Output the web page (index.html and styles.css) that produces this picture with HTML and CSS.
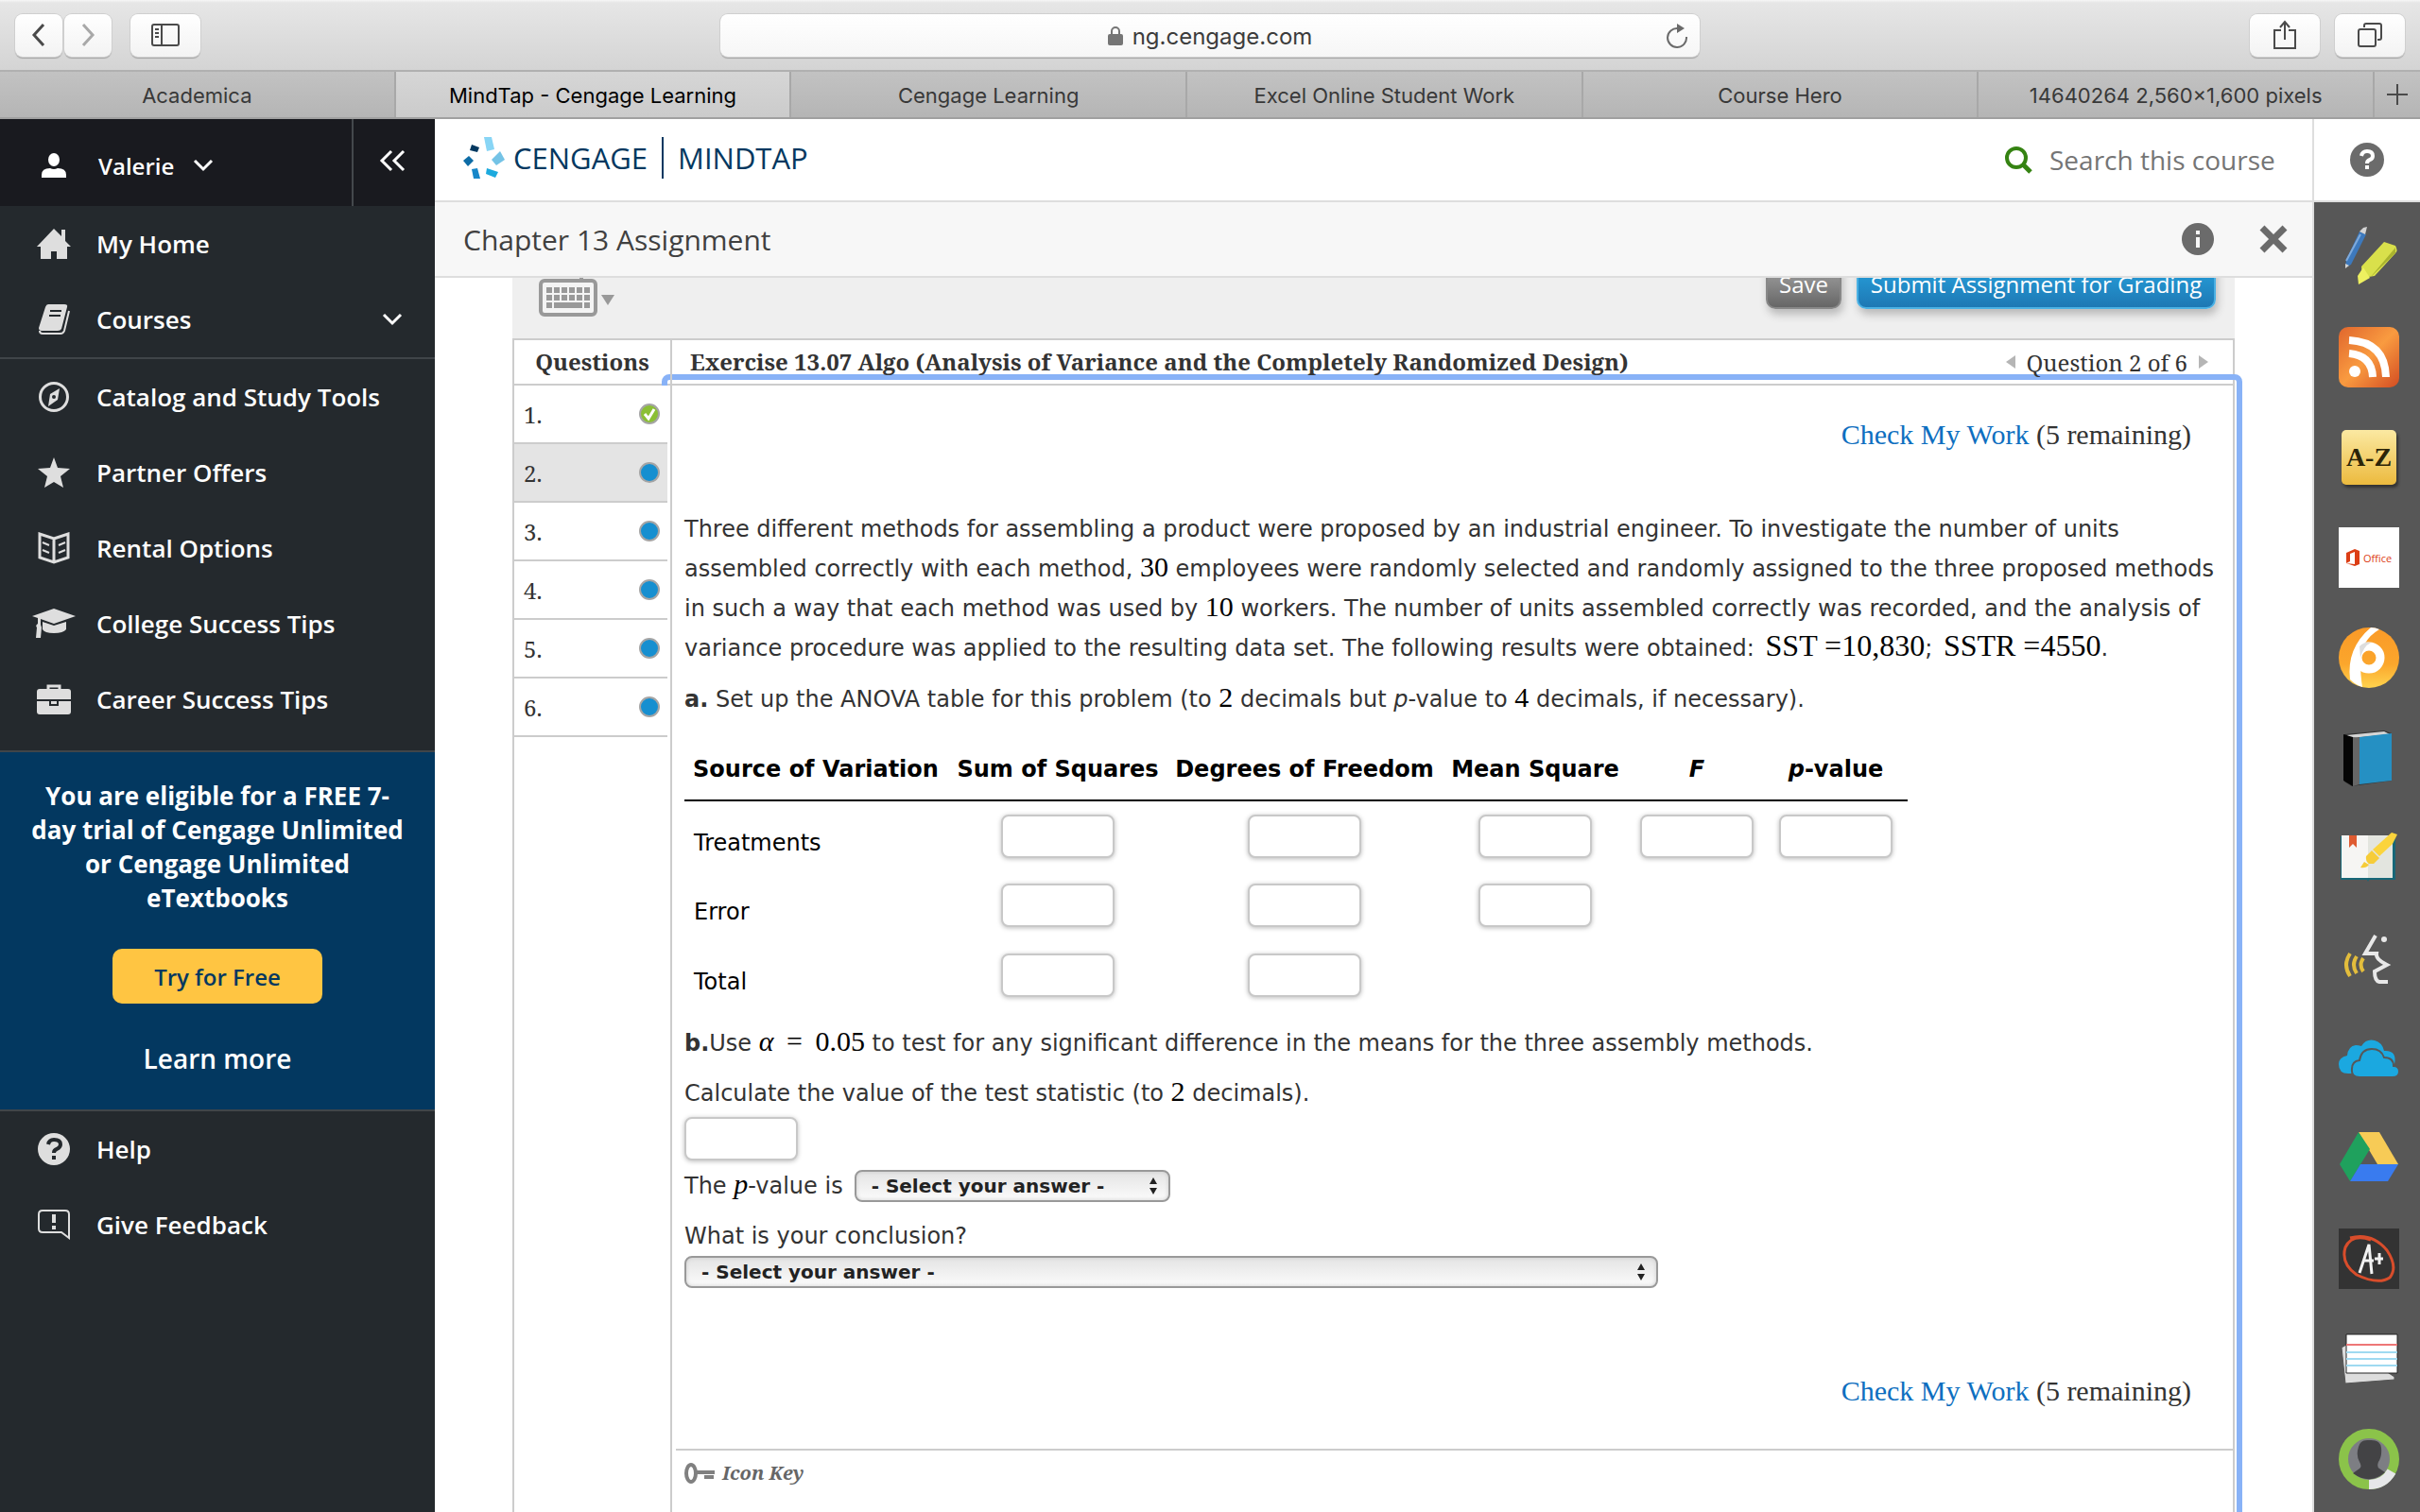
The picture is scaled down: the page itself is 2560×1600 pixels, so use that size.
FILE: index.html
```html
<!DOCTYPE html>
<html lang="en">
<head>
<meta charset="utf-8">
<title>MindTap - Cengage Learning</title>
<link rel="stylesheet" href="styles.css">
</head>
<body>
<header class="toolbar">
  <div class="tool-group tool-left">
    <button class="tool tool-nav" aria-label="Back"><svg width="16" height="26" viewBox="0 0 16 26" fill="none" stroke="#4a4a4a" stroke-width="3"><path d="M13 2 3 13l10 11"/></svg></button>
    <button class="tool tool-nav" aria-label="Forward"><svg width="16" height="26" viewBox="0 0 16 26" fill="none" stroke="#a8a8a8" stroke-width="3"><path d="m3 2 10 11L3 24"/></svg></button>
    <button class="tool tool-side" aria-label="Show sidebar"><svg width="30" height="24" viewBox="0 0 30 24" fill="none" stroke="#4a4a4a" stroke-width="2"><rect x="1" y="1" width="28" height="22" rx="2"/><path d="M11 1v22M4 6h4M4 10h4M4 14h4"/></svg></button>
  </div>
  <div class="address">
    <span class="address-url"><svg width="16" height="22" viewBox="0 0 16 22"><path d="M4 10V6a4 4 0 0 1 8 0v4" fill="none" stroke="#757575" stroke-width="2"/><rect y="9" width="16" height="12" rx="2" fill="#757575"/></svg>ng.cengage.com</span>
    <button class="reload" aria-label="Reload"><svg width="24" height="28" viewBox="0 0 24 28"><path d="M13 6A10 10 0 1 0 22 15" fill="none" stroke="#6a6a6a" stroke-width="2"/><path d="m12 1 8 5-8 5z" fill="#6a6a6a"/></svg></button>
  </div>
  <div class="tool-group tool-right">
    <button class="tool tool-side" aria-label="Share"><svg width="24" height="32" viewBox="0 0 24 32" fill="none" stroke="#4a4a4a" stroke-width="2"><path d="M8 11H1v19h22V11h-7M12 21V2M7 8l5-6 5 6"/></svg></button>
    <button class="tool tool-side" aria-label="Show all tabs"><svg width="26" height="26" viewBox="0 0 26 26" fill="none" stroke="#4a4a4a" stroke-width="2"><rect x="1" y="7" width="18" height="18" rx="2"/><path d="M7 5V3q0-2 2-2h14q2 0 2 2v13q0 2-2 2h-2"/></svg></button>
  </div>
</header>
<nav class="tabs" aria-label="Tabs">
  <a class="tab" href="#">Academica</a>
  <a class="tab tab-on" href="#">MindTap - Cengage Learning</a>
  <a class="tab" href="#">Cengage Learning</a>
  <a class="tab" href="#">Excel Online Student Work</a>
  <a class="tab" href="#">Course Hero</a>
  <a class="tab" href="#">14640264 2,560×1,600 pixels</a>
  <button class="tab-add" aria-label="New tab"><svg width="22" height="22" viewBox="0 0 22 22" stroke="#4a4a4a" stroke-width="2"><path d="M11 0v22M0 11h22"/></svg></button>
</nav>
<div class="app">
  <aside class="sidebar">
    <div class="user">
      <button class="user-name"><svg class="user-pic" width="26" height="26" viewBox="0 0 26 26" fill="#fff"><ellipse cx="13" cy="7" rx="6" ry="7"/><path d="M0 26v-3q0-7 9-7 4 2 8 0 9 0 9 7v3z"/></svg>Valerie<svg width="22" height="14" viewBox="0 0 22 14" fill="none" stroke="#fff" stroke-width="3"><path d="m2 2 9 9 9-9"/></svg></button>
      <button class="collapse" aria-label="Collapse menu"><svg width="28" height="24" viewBox="0 0 28 24" fill="none" stroke="#fff" stroke-width="3"><path d="M13 2 3 12l10 10M26 2 16 12l10 10"/></svg></button>
    </div>
    <ul class="menu">
      <li><a href="#"><span class="menu-icon"><svg width="38" height="34" viewBox="0 0 38 34" fill="#dedede"><path d="M19 1 1 20h4v13h11v-8h6v8h11V20h4l-6-6V2h-4v7z"/></svg></span>My Home</a></li>
      <li><a href="#"><span class="menu-icon"><svg width="34" height="34" viewBox="0 0 34 34"><path d="M11 1h17q4 0 3 3l-6 23q-1 2-4 2H4q-3 0-3-3L8 4q1-3 3-3z" fill="#dedede"/><path d="M13 8h12M12 13h12" stroke="#24292d" stroke-width="2"/><path d="M2 29q0 3 3 3h19q3 0 4-3l5-21" fill="none" stroke="#dedede" stroke-width="2"/></svg></span>Courses<svg class="chevron" width="22" height="14" viewBox="0 0 22 14" fill="none" stroke="#fff" stroke-width="3"><path d="m2 2 9 9 9-9"/></svg></a></li>
    </ul>
    <ul class="menu menu-mid">
      <li><a href="#"><span class="menu-icon"><svg width="32" height="32" viewBox="0 0 32 32"><circle cx="16" cy="16" r="14.500" fill="none" stroke="#dedede" stroke-width="3"/><path d="m22 7-2 12-10 7 2-13z" fill="#dedede"/><circle cx="16" cy="16" r="2" fill="#24292d"/></svg></span>Catalog and Study Tools</a></li>
      <li><a href="#"><span class="menu-icon"><svg width="34" height="32" viewBox="0 0 34 32" fill="#dedede"><path d="m17 0 4 11 13 1-10 8 3 12-10-6-10 6 3-12L0 12l13-1z"/></svg></span>Partner Offers</a></li>
      <li><a href="#"><span class="menu-icon"><svg width="34" height="34" viewBox="0 0 34 34" fill="none" stroke="#dedede" stroke-width="3"><path d="m17 7 15-5v25l-15 5-15-5V2zM17 7v25"/><path d="m5 11 7 3M5 19l7 3M29 11l-7 3M29 19l-7 3" stroke-width="2"/></svg></span>Rental Options</a></li>
      <li><a href="#"><span class="menu-icon"><svg width="46" height="32" viewBox="0 0 46 32" fill="#dedede"><path d="m23 0 23 8-23 8-14-5v6l1 3-1 11H4l1-11q-2-2 1-4v-6l-6-2z"/><path d="m11 14 12 4 13-4v8q-3 4-13 4t-12-4z"/></svg></span>College Success Tips</a></li>
      <li><a href="#"><span class="menu-icon"><svg width="36" height="32" viewBox="0 0 36 32"><path d="M12 6V2h12v4" fill="none" stroke="#dedede" stroke-width="3"/><rect y="5" width="36" height="27" rx="3" fill="#dedede"/><path d="M0 17h36M14 17v5h8v-5" fill="none" stroke="#24292d" stroke-width="2"/></svg></span>Career Success Tips</a></li>
    </ul>
    <section class="promo">
      <p>You are eligible for a FREE 7-day trial of Cengage Unlimited or Cengage Unlimited eTextbooks</p>
      <button class="promo-try">Try for Free</button>
      <a class="promo-more" href="#">Learn more</a>
    </section>
    <ul class="menu menu-end">
      <li><a href="#"><span class="menu-icon"><svg width="34" height="34" viewBox="0 0 34 34"><circle cx="17" cy="17" r="17" fill="#dedede"/><path d="M11 12q1-5 6-5 7 0 7 5 0 3-4 5-3 1-3 4M17 24v4" fill="none" stroke="#24292d" stroke-width="4"/></svg></span>Help</a></li>
      <li><a href="#"><span class="menu-icon"><svg width="34" height="34" viewBox="0 0 34 34" fill="none" stroke="#dedede" stroke-width="2"><path d="M5 2h24q4 0 4 4v25l-8-6H5q-4 0-4-4V6q0-4 4-4z"/><path d="M17 6v9M17 18v4" stroke-width="4"/></svg></span>Give Feedback</a></li>
    </ul>
  </aside>
  <main class="main">
    <div class="brandbar">
      <a class="brand" href="#">
        <svg width="44" height="44" viewBox="0 0 44 44"><path fill="#88d5f5" d="M22 0h8l3 13-8 2z"/><path fill="#74c3e6" d="m39 15 5 9-9 6-5-6z"/><path fill="#1caade" d="m25 33 12 4-3 6-10-4z"/><path fill="#1787c9" d="m9 34 6-1 3 11h-7z"/><path fill="#0d6ca6" d="m6 20 5 5-6 6-5-6z"/><path fill="#033860" d="m9 8 8 3-2 5-8-2z"/></svg>
        <span>CENGAGE</span><i class="brand-rule"></i><span>MINDTAP</span>
      </a>
      <label class="search"><svg width="30" height="30" viewBox="0 0 30 30" fill="none" stroke="#358312" stroke-width="4"><circle cx="13" cy="13" r="10"/><path d="m20 20 8 8" stroke-width="5"/></svg><input type="text" placeholder="Search this course" aria-label="Search this course"></label>
    </div>
    <div class="titlebar">
      <h1>Chapter 13 Assignment</h1>
      <button class="icon-btn" aria-label="Information"><svg width="34" height="34" viewBox="0 0 34 34"><circle cx="17" cy="17" r="17" fill="#6b6b6b"/><path d="M17 8v4M17 15v11" stroke="#f7f7f7" stroke-width="4"/></svg></button>
      <button class="icon-btn" aria-label="Close"><svg width="30" height="30" viewBox="0 0 30 30" stroke="#6b6b6b" stroke-width="7"><path d="m3 3 24 24M27 3 3 27"/></svg></button>
    </div>
    <div class="pane">
      <div class="actions">
        <button class="keyboard" aria-label="Keyboard shortcuts"><svg width="80" height="44" viewBox="0 0 80 44"><path d="M45 4V0" stroke="#999" stroke-width="4"/><rect x="2" y="5" width="58" height="36" rx="4" fill="#f4f4f4" stroke="#999" stroke-width="4"/><path d="M8 15h46M8 23h46" stroke="#999" stroke-width="6" stroke-dasharray="6 2"/><path d="M8 31h6M16 31h30M48 31h6" stroke="#999" stroke-width="6"/><path d="M66 20h14l-7 11z" fill="#999"/></svg></button>
        <button class="pill pill-save">Save</button>
        <button class="pill pill-submit">Submit Assignment for Grading</button>
      </div>
      <div class="sheet">
        <div class="focus"></div>
        <div class="sheet-head">
          <h2 class="list-title">Questions</h2>
          <h2 class="exercise">Exercise 13.07 Algo (Analysis of Variance and the Completely Randomized Design)</h2>
          <div class="pager"><svg width="10" height="14" viewBox="0 0 10 14" fill="#b5b5b5"><path d="M10 0v14L0 7z"/></svg>Question 2 of 6<svg width="10" height="14" viewBox="0 0 10 14" fill="#b5b5b5"><path d="M0 0v14l10-7z"/></svg></div>
        </div>
        <div class="sheet-body">
          <ol class="list">
            <li><a href="#">1.<svg width="22" height="22" viewBox="0 0 22 22"><circle cx="11" cy="11" r="10" fill="#8bbf35" stroke="#a5a5a5" stroke-width="2"/><path d="m6 11 4 5 6-10" fill="none" stroke="#fff" stroke-width="3"/></svg></a></li>
            <li class="on"><a href="#">2.<i class="dot"></i></a></li>
            <li><a href="#">3.<i class="dot"></i></a></li>
            <li><a href="#">4.<i class="dot"></i></a></li>
            <li><a href="#">5.<i class="dot"></i></a></li>
            <li><a href="#">6.<i class="dot"></i></a></li>
          </ol>
          <article class="question">
            <p class="check"><a href="#">Check My Work</a> (5 remaining)</p>
            <p class="text intro">Three different methods for assembling a product were proposed by an industrial engineer. To investigate the number of units<br>assembled correctly with each method, <span class="math">30</span> employees were randomly selected and randomly assigned to the three proposed methods<br>in such a way that each method was used by <span class="math">10</span> workers. The number of units assembled correctly was recorded, and the analysis of<br>variance procedure was applied to the resulting data set. The following results were obtained: <span class="math math-sum">SST =10,830</span>; <span class="math math-sum">SSTR =4550</span>.</p>
            <p class="text"><b>a.</b> Set up the ANOVA table for this problem (to <span class="math">2</span> decimals but <em>p</em>-value to <span class="math">4</span> decimals, if necessary).</p>
            <table class="anova">
              <colgroup><col class="c1"><col class="c2"><col class="c3"><col class="c4"><col class="c5"><col class="c6"></colgroup>
              <thead><tr><th>Source of Variation</th><th>Sum of Squares</th><th>Degrees of Freedom</th><th>Mean Square</th><th><em>F</em></th><th><em>p</em>-value</th></tr></thead>
              <tbody>
                <tr><th>Treatments</th><td><input class="box" type="text" aria-label="Treatments sum of squares"></td><td><input class="box" type="text" aria-label="Treatments degrees of freedom"></td><td><input class="box" type="text" aria-label="Treatments mean square"></td><td><input class="box" type="text" aria-label="Treatments F"></td><td><input class="box" type="text" aria-label="Treatments p-value"></td></tr>
                <tr><th>Error</th><td><input class="box" type="text" aria-label="Error sum of squares"></td><td><input class="box" type="text" aria-label="Error degrees of freedom"></td><td><input class="box" type="text" aria-label="Error mean square"></td><td></td><td></td></tr>
                <tr><th>Total</th><td><input class="box" type="text" aria-label="Total sum of squares"></td><td><input class="box" type="text" aria-label="Total degrees of freedom"></td><td></td><td></td><td></td></tr>
              </tbody>
            </table>
            <p class="text part-b"><b>b.</b>Use <span class="math"><i>α</i>&thinsp; = &thinsp;0.05</span> to test for any significant difference in the means for the three assembly methods.</p>
            <div class="text field"><label for="stat">Calculate the value of the test statistic (to <span class="math">2</span> decimals).</label><input class="box" id="stat" type="text"></div>
            <div class="text inline"><label for="pv">The <span class="math"><i>p</i></span>-value is</label>
              <span class="pick"><select id="pv"><option>- Select your answer -</option></select><svg class="pick-arrows" width="10" height="18" viewBox="0 0 10 18" fill="#222"><path d="m5 0 4 7H1zM5 18l4-7H1z"/></svg></span></div>
            <div class="text field"><label for="concl">What is your conclusion?</label>
              <span class="pick pick-wide"><select id="concl"><option>- Select your answer -</option></select><svg class="pick-arrows" width="10" height="18" viewBox="0 0 10 18" fill="#222"><path d="m5 0 4 7H1zM5 18l4-7H1z"/></svg></span></div>
            <p class="check check-end"><a href="#">Check My Work</a> (5 remaining)</p>
            <footer class="key"><svg width="34" height="24" viewBox="0 0 34 24" fill="none" stroke="#808080" stroke-width="4"><ellipse cx="8" cy="12" rx="5" ry="9"/><path d="M13 11h20M22 16h10"/></svg>Icon Key</footer>
          </article>
        </div>
      </div>
    </div>
  </main>
  <aside class="rail">
    <button class="rail-help" aria-label="Help"><svg width="36" height="36" viewBox="0 0 36 36"><circle cx="18" cy="18" r="18" fill="#6b6b6b"/><path d="M12 14q1-5 6-5 6 0 6 5 0 3-3 4-3 1-3 4M18 24v4" fill="none" stroke="#fff" stroke-width="4"/></svg></button>
    <div class="rail-apps">
      <a href="#" aria-label="Highlighter"><svg width="64" height="64" viewBox="0 0 64 64"><path d="m22 5 7 3L13 40l-6 3 1-8z" fill="#3d79bd"/><path d="m22 5 4-4 4-1-2 8zM7 39v5l4-3z" fill="#d4d4d4"/><path d="m8 36 15-28" stroke="#7fabdc" stroke-width="2"/><path d="m24 42 24-26 12 4q3 5 0 8L38 52l-13 2z" fill="#d9e04b"/><path d="m33 54 27-26v-6L38 48z" fill="#a9b32f"/><path d="m20 52 6-9 7 11-12 7z" fill="#eef060"/></svg></a>
      <a href="#" aria-label="RSS"><svg width="64" height="64" viewBox="0 0 64 64"><defs><linearGradient id="rss" x1="0" y1="0" x2="1" y2="1"><stop stop-color="#e0662d"/><stop offset=".5" stop-color="#f99b40"/><stop offset="1" stop-color="#d34c22"/></linearGradient></defs><rect width="64" height="64" rx="10" fill="url(#rss)"/><circle cx="17" cy="47" r="6" fill="#fff"/><path d="M11 28q24 2 25 25M11 14q38 2 39 39" fill="none" stroke="#fff" stroke-width="8"/></svg></a>
      <a href="#" aria-label="Glossary"><span class="az">A-Z</span></a>
      <a href="#" aria-label="Office"><span class="office"><svg width="14" height="18" viewBox="0 0 14 18"><path d="M0 4 9 0l5 2v14l-5 2-9-3 9 1V3L4 5v8l-4 2z" fill="#dc3e15"/></svg>Office</span></a>
      <a href="#" aria-label="Progress"><svg width="64" height="64" viewBox="0 0 64 64"><defs><linearGradient id="prog" x2="0" y2="1"><stop stop-color="#fa9a28"/><stop offset=".6" stop-color="#fba62c"/><stop offset="1" stop-color="#ffd34e"/></linearGradient></defs><circle cx="32" cy="32" r="32" fill="url(#prog)"/><circle cx="32" cy="32" r="12" fill="none" stroke="#fff" stroke-width="9"/><path d="M34 0q5 0 9 2-20 12-20 34 0 15 2 27-7-2-13-8Q8 22 34 0z" fill="#fff"/><path d="M22 20q6-6 12-4-8 4-11 16z" fill="#ddd"/></svg></a>
      <a href="#" aria-label="Book"><svg width="64" height="64" viewBox="0 0 64 64"><path d="m6 7 42-4 8 3v50l-42 6-8-5z" fill="#333"/><path d="m8 8 40-4 6 3-40 4z" fill="#d5d5d5"/><path d="m22 10 34-4v50l-34 4z" fill="#2590c3"/><path d="m15 10 7 1v49l-7 2z" fill="#666"/><path d="m5 7 10 3v52l-10-6z" fill="#050505"/></svg></a>
      <a href="#" aria-label="Notebook"><svg width="64" height="64" viewBox="0 0 64 64"><path d="M2 9h58v46H32l-1 2-1-2H2z" fill="#176777"/><path d="M3 8h28v45H3z" fill="#f6f5f3"/><path d="M31 8h26v45H31z" fill="#e3e5df"/><path d="M11 8h8v13l-4-4-4 4z" fill="#df5b31"/><path d="m62 7-5 10-14 13-7-7L56 5z" fill="#fbd43c"/><path d="m35 24 8 8-6 6h-5q-4-3-3-8zM27 36l5 3q-3 4-9 3z" fill="#f6cc38"/></svg></a>
      <a href="#" aria-label="Read aloud"><svg width="64" height="64" viewBox="0 0 64 64" fill="none"><path d="m39 8-11 19h12q-1 6 11 12l-13 7q0 10 5 11h9" stroke="#e8e8e8" stroke-width="4"/><circle cx="48" cy="12" r="3" fill="#e8e8e8"/><path d="M12 27q-8 12 0 24M19 30q-6 9 0 18M26 32q-5 7 0 14" stroke="#e3bd3c" stroke-width="4"/></svg></a>
      <a href="#" aria-label="OneDrive"><svg width="64" height="64" viewBox="0 0 64 64" fill="#1ba8e0"><path d="M10 48Q0 48 0 38q0-7 9-9Q10 19 18 18q3 0 6 1Q29 11 38 13q8 2 10 11 14-1 11 14L14 48z"/><path d="M22 52q-9 0-8-9 0-8 8-9Q24 22 35 22q10 0 13 9 10 0 10 9 6 0 6 6 0 6-7 6z" stroke="#575757" stroke-width="2"/></svg></a>
      <a href="#" aria-label="Google Drive"><svg width="64" height="64" viewBox="0 0 64 64"><path d="M21 4h22l20 34H41z" fill="#f7cb56"/><path d="M21 4 1 38l11 18 21-34z" fill="#1fa15d"/><path d="M12 56 23 38h40L52 56z" fill="#397bef"/></svg></a>
      <a href="#" aria-label="Grades"><svg width="64" height="64" viewBox="0 0 64 64" fill="none"><path d="M0 0h64v64H0z" fill="#333"/><path d="M12 10Q35 4 51 23q12 18 3 29-12 8-35-3Q2 37 7 20 14 5 34 12" stroke="#d84d2b" stroke-width="3"/><path d="M22 47 32 17l3 31M26 34h11M38 32h9M43 26v12" stroke="#f2f2f2" stroke-width="3"/></svg></a>
      <a href="#" aria-label="Flashcards"><svg width="64" height="64" viewBox="0 0 64 64"><path d="m3 20 5-3 51 34v3L7 58z" fill="#ddd" stroke="#555"/><path d="M8 6h54v41H8z" fill="#fff" stroke="#222"/><path d="M8 17h54" stroke="#ee7777" stroke-width="2"/><path d="M8 25h54M8 32h54M8 39h54" stroke="#9fdaf1" stroke-width="2"/></svg></a>
      <a href="#" aria-label="Profile"><svg width="64" height="64" viewBox="0 0 64 64"><circle cx="32" cy="32" r="27" fill="#7d7e83" stroke="#8bc34a" stroke-width="10"/><path d="M32 59q16 0 24-14" fill="none" stroke="#e6e7e9" stroke-width="10"/><path d="M21 19q2-8 11-7 12-1 13 8 1 9-3 15-2 5 1 7l6 4Q33 60 15 47l7-5q3-2 0-7-4-7-1-16z" fill="#434345"/></svg></a>
    </div>
  </aside>
</div>
</body>
</html>
```
FILE: styles.css
```css
* { box-sizing: border-box; }
body {
  margin: 0;
  height: 100vh;
  display: flex;
  flex-direction: column;
  overflow: hidden;
  font-family: "Open Sans", sans-serif;
  background: #fff;
  color: #333;
}
a { color: inherit; text-decoration: none; }
button { border: 0; padding: 0; background: none; font: inherit; color: inherit; }
h1, h2, p, ul, ol { margin: 0; padding: 0; }
ul, ol { list-style: none; }
svg { display: block; flex: none; }

/* Browser chrome */
.toolbar {
  display: grid;
  grid-template-columns: 1fr 1036px 1fr;
  align-items: center;
  height: 76px;
  padding: 0 16px;
  background: linear-gradient(#f6f6f6, #e6e6e6 3px, #d4d4d4);
  border-bottom: 2px solid #b0b0b0;
  font-family: Inter, sans-serif;
}
.tool-group { display: flex; gap: 2px; }
.tool {
  display: flex;
  align-items: center;
  justify-content: center;
  height: 45px;
  border-radius: 8px;
  background: linear-gradient(#fff, #f3f3f3);
  box-shadow: 0 0 0 1px #cfcfcf, 0 2px 1px #a5a5a5;
}
.tool-nav { width: 50px; }
.tool-side { width: 74px; }
.tool-left .tool-side { margin-left: 18px; }
.tool-right { justify-self: end; gap: 16px; }
.address {
  display: flex;
  align-items: center;
  height: 45px;
  padding: 2px 12px 0 36px;
  border-radius: 8px;
  background: linear-gradient(#fff, #f6f6f6);
  box-shadow: 0 0 0 1px #cfcfcf, 0 2px 1px #a5a5a5;
}
.address-url {
  flex: 1;
  display: flex;
  align-items: center;
  justify-content: center;
  gap: 10px;
  font-size: 24px;
  color: #3c3c3c;
}
.tabs {
  display: flex;
  height: 50px;
  border-bottom: 2px solid #a0a0a0;
  background: linear-gradient(#c2c2c2, #b5b5b5);
  font: 22px/50px Inter, sans-serif;
}
.tab { flex: 1; text-align: center; border-right: 2px solid #a8a8a8; color: #383838; }
.tab-on { background: linear-gradient(#d6d6d6, #cbcbcb); color: #000; }
.tab-add { width: 48px; display: flex; align-items: center; justify-content: center; }

/* App frame */
.app {
  flex: 1;
  min-height: 0;
  display: grid;
  grid-template-columns: 460px minmax(0, 1fr) 112px;
}

/* Left navigation */
.sidebar { background: #24292d; color: #fff; font-size: 26px; font-weight: 600; }
.user { display: flex; height: 92px; background: #191a1f; }
.user-name { flex: 1; display: flex; align-items: center; gap: 20px; padding: 6px 0 0 44px; font-size: 24px; }
.user-pic { margin-right: 14px; }
.collapse {
  width: 88px;
  display: flex;
  align-items: center;
  justify-content: center;
  padding: 0 4px 4px 0;
  border-left: 2px solid #44484c;
}
.menu { border-bottom: 2px solid #404549; }
.menu a { display: flex; align-items: center; gap: 22px; height: 80px; padding: 0 34px; }
.menu-icon { width: 46px; display: flex; justify-content: center; }
.chevron { margin-left: auto; }
.menu-mid { padding-bottom: 14px; }
.menu-end { border: 0; }
.promo {
  display: flex;
  flex-direction: column;
  align-items: center;
  padding: 28px 30px 36px;
  background: #033860;
  border-bottom: 2px solid #404549;
  text-align: center;
}
.promo p { font-size: 26px; line-height: 36px; font-weight: 700; }
.promo-try {
  width: 222px;
  height: 58px;
  margin: 36px 0 40px;
  border-radius: 10px;
  background: #ffc542;
  color: #033860;
  font-size: 24px;
}
.promo-more { font-size: 28px; line-height: 36px; }

/* Course header */
.main { display: flex; flex-direction: column; border-right: 2px solid #dedede; }
.brandbar {
  display: flex;
  align-items: center;
  justify-content: space-between;
  height: 88px;
  padding: 0 30px;
  border-bottom: 2px solid #dedede;
}
.brand { display: flex; align-items: center; gap: 9px; padding-bottom: 4px; font-size: 31px; line-height: 40px; color: #033860; }
.brand-rule { width: 2px; height: 44px; margin: 0 6px; background: #033860; }
.search { display: flex; align-items: center; gap: 18px; }
.search input {
  width: 248px;
  padding: 0;
  border: 0;
  font: 28px "Open Sans", sans-serif;
}
.search input::placeholder { color: #757575; }
.titlebar {
  display: flex;
  align-items: center;
  gap: 48px;
  height: 80px;
  padding: 0 26px 0 30px;
  background: #f7f7f7;
  border-bottom: 2px solid #dedede;
}
.titlebar h1 { flex: 1; font-size: 30px; font-weight: 400; color: #404040; }

/* Assignment */
.pane {
  flex: 1;
  min-height: 0;
  overflow: hidden;
  display: flex;
  flex-direction: column;
  padding: 0 82px;
}
.actions {
  display: flex;
  gap: 16px;
  height: 84px;
  margin-top: -20px;
  padding: 0 20px 0 28px;
  background: #efefef;
}
.keyboard { align-self: flex-start; margin: 18px auto 0 0; }
.pill {
  height: 53px;
  border-radius: 10px;
  border: 2px solid;
  color: #fff;
  font-size: 24px;
  box-shadow: 2px 6px 8px #bbb;
}
.pill-save { width: 80px; background: linear-gradient(#aaa, #666); border-color: #888; }
.pill-submit { width: 380px; background: linear-gradient(#27a5e0, #1e78b4); border-color: #4bb1e4; }
.sheet {
  position: relative;
  flex: 1;
  display: flex;
  flex-direction: column;
  border: solid #ccc;
  border-width: 2px 2px 0;
  font-family: "Noto Serif", "Liberation Serif", serif;
}
.focus {
  position: absolute;
  inset: 36px -10px -20px 156px;
  border: 6px solid #88b2f7;
  border-radius: 8px;
}
.sheet-head { display: flex; align-items: center; height: 48px; border-bottom: 2px solid #ccc; }
.sheet-head h2 { font-size: 24px; line-height: 46px; }
.sheet-head h2, .pager { position: relative; }
.list-title { width: 167px; border-right: 2px solid #ccc; text-align: center; }
.exercise { flex: 1; padding-left: 19px; }
.pager { display: flex; align-items: center; gap: 12px; padding-right: 26px; font-size: 24px; }
.sheet-body { position: relative; flex: 1; display: flex; background: #fff; }
.list { width: 167px; padding-right: 3px; border-right: 2px solid #ccc; font-size: 24px; }
.list a {
  display: flex;
  align-items: center;
  justify-content: space-between;
  height: 62px;
  padding: 0 8px 0 10px;
  border-bottom: 2px solid #ccc;
}
.list .on { background: #e4e4e4; }
.dot { width: 22px; height: 22px; border: 2px solid #a5a5a5; border-radius: 50%; background: #168fd0; }
.question { flex: 1; display: flex; flex-direction: column; align-items: flex-start; padding-left: 13px; }
.check {
  align-self: flex-end;
  margin: 34px 44px 61px 0;
  font: 30px/36px "Liberation Serif", serif;
}
.check a { color: #0e6fc0; }
.text { font: 24px/42px "DejaVu Sans", sans-serif; white-space: nowrap; }
.intro { margin-bottom: 12px; }
.math { font-family: "Liberation Serif", serif; font-size: 30px; line-height: 30px; color: #000; }
.math-sum { margin-left: 4px; font-size: 32px; }
.anova {
  width: 1294px;
  margin: 20px 0 14px;
  table-layout: fixed;
  border-collapse: collapse;
  font: 24px/30px "DejaVu Sans", sans-serif;
  color: #000;
}
.c1 { width: 278px; }
.c2 { width: 234px; }
.c3 { width: 288px; }
.c4 { width: 200px; }
.c5 { width: 142px; }
.c6 { width: 152px; }
.anova th, .anova td { padding: 0; text-align: center; white-space: nowrap; }
.anova thead th { height: 66px; border-bottom: 2px solid #000; }
.anova tbody th { height: 74px; padding: 14px 0 0 10px; text-align: left; font-weight: 400; }
.box {
  display: block;
  width: 120px;
  height: 46px;
  border: 2px solid #c8c8c8;
  border-radius: 8px;
  background: #fff;
  box-shadow: 0 1px 5px #bbb;
}
.anova .box { margin: 0 auto; }
.part-b { margin-bottom: 11px; }
.field { display: flex; flex-direction: column; align-items: flex-start; }
.field .box { margin-top: 4px; }
.inline { display: flex; align-items: center; gap: 12px; margin: 6px 0 11px; }
.pick { position: relative; width: 334px; height: 34px; }
.pick-wide { width: 1030px; }
.pick select {
  display: block;
  width: 100%;
  height: 34px;
  padding: 0 16px;
  appearance: none;
  border: 2px solid #999;
  border-radius: 8px;
  background: linear-gradient(#e4e4e4, #fbfbfb);
  box-shadow: inset 0 0 4px #ccc;
  color: #222;
  font: bold 20px/28px "DejaVu Sans", sans-serif;
}
.pick-arrows { position: absolute; top: 8px; right: 13px; }
.check-end { margin: 91px 44px 43px 0; }
.key {
  align-self: stretch;
  display: flex;
  align-items: center;
  gap: 7px;
  margin-left: -9px;
  padding: 8px;
  border-top: 2px solid #ccc;
  font: italic bold 20px/32px "Noto Serif", "Liberation Serif", serif;
  color: #666;
}

/* Tool rail */
.rail { display: flex; flex-direction: column; }
.rail-help { height: 88px; display: flex; align-items: center; justify-content: center; border-bottom: 2px solid #dedede; }
.rail-apps {
  flex: 1;
  min-height: 0;
  display: flex;
  flex-direction: column;
  align-items: center;
  gap: 42px;
  padding: 26px 0 0 4px;
  background: #575757;
}
.rail-apps a { width: 64px; height: 64px; flex: none; display: flex; align-items: center; justify-content: center; }
.az {
  width: 58px;
  border-radius: 5px;
  background: linear-gradient(#fbe9a2, #ecba3e);
  box-shadow: 2px 3px 3px #333;
  color: #2b2408;
  font: bold 28px/58px "Liberation Serif", serif;
  text-align: center;
}
.office {
  display: flex;
  align-items: center;
  justify-content: center;
  gap: 4px;
  width: 64px;
  height: 64px;
  background: #fff;
  color: #dc3e15;
  font-size: 11px;
}
```
